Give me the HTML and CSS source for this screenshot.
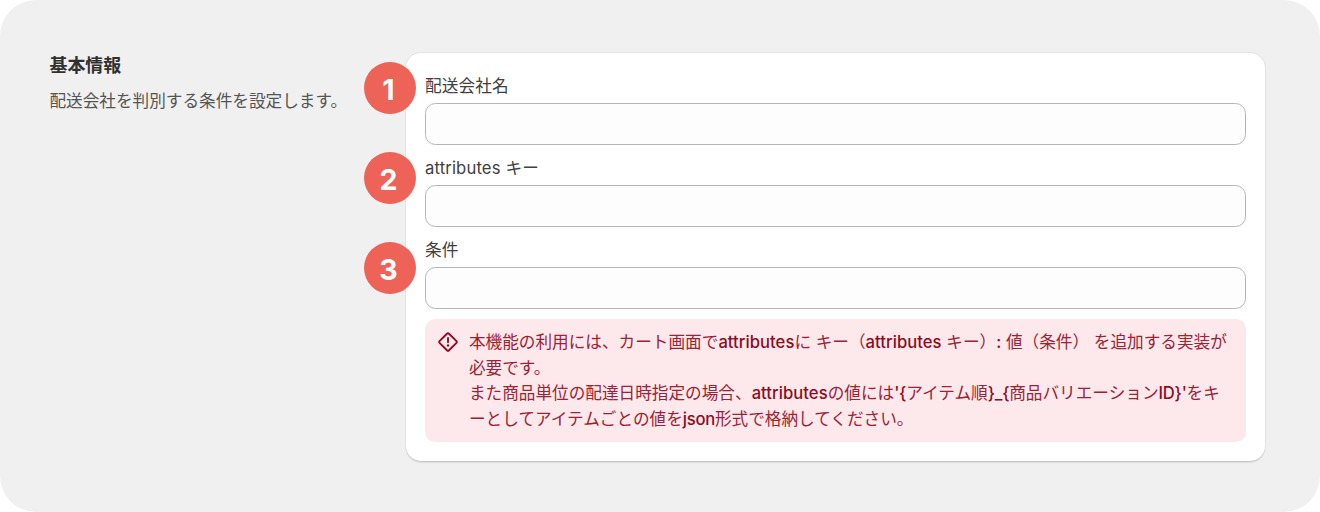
FILE: index.html
```html
<!DOCTYPE html>
<html lang="ja">

<head>
    <meta charset="utf-8" />
    <title>基本情報</title>
    <link rel="stylesheet" href="styles.css">
</head>

<body>
    <div class="page">
        <div class="about">
            <h2>基本情報</h2>
            <p>配送会社を判別する条件を設定します。</p>
        </div>
        <div class="card">
            <div class="field">
                <span class="badge">1</span>
                <label for="company">配送会社名</label>
                <input type="text" id="company">
            </div>
            <div class="field">
                <span class="badge second">2</span>
                <label for="key">attributes キー</label>
                <input type="text" id="key">
            </div>
            <div class="field">
                <span class="badge third">3</span>
                <label for="condition">条件</label>
                <input type="text" id="condition">
            </div>
            <div class="notice">
                <svg class="icon" viewBox="0 0 20 20" fill="none" stroke="#8e0b21" stroke-width="1.9" stroke-linecap="round" stroke-linejoin="round">
                    <path d="M9.2 1.5a1.1 1.1 0 0 1 1.6 0l7.7 7.7a1.1 1.1 0 0 1 0 1.6l-7.7 7.7a1.1 1.1 0 0 1-1.6 0l-7.7-7.7a1.1 1.1 0 0 1 0-1.6z" />
                    <path d="M10 6v4.3" />
                    <circle cx="10" cy="13.4" r="1.2" fill="#8e0b21" stroke="none" />
                </svg>
                <p>本機能の利用には、カート画面で<b>attributes</b>に キー（<b>attributes</b> キー）<b>:</b> 値（条件） を追加する実装が<br>
                    必要です。<br>
                    また商品単位の配達日時指定の場合、<b>attributes</b>の値には<b class="tight">'{</b>アイテム順<b class="tight">}_{</b>商品バリエーション<b class="tight">ID}'</b>をキ<br>
                    ーとしてアイテムごとの値を<b class="tight">json</b>形式で格納してください。</p>
            </div>
        </div>
    </div>
</body>

</html>
```
FILE: styles.css
```css
body {
    margin: 0;
    background-color: #fff;
    font-family: Inter, "Noto Sans CJK JP", sans-serif;
    font-size: 16.64px;
    line-height: 25.6px;
    color: #404040;
}

.page {
    display: flex;
    box-sizing: border-box;
    width: 1320px;
    height: 512px;
    padding: 53px 55px 50px 49.5px;
    border-radius: 36px;
    background-color: #f0f0f0;
}

.about {
    width: 356.5px;
    flex: none;
    white-space: nowrap;
}

.about h2 {
    margin: 0 0 10.4px;
    color: #303030;
    font-size: 17.92px;
    font-weight: 600;
}

.about p {
    margin: 0;
    color: #555;
}

.card {
    display: flex;
    flex-direction: column;
    gap: 10.2px;
    flex: 1;
    box-sizing: border-box;
    height: 408px;
    padding: 20.6px 19px 19px;
    border-radius: 15px;
    background-color: #fff;
    box-shadow: 0 1px 0 0 #c8c8c8, 0 0 0 1px #e3e3e3, 0 2px 1px 0 #ddd;
}

.field {
    display: flex;
    flex-direction: column;
    gap: 4px;
    position: relative;
}

.field input {
    box-sizing: border-box;
    width: 100%;
    height: 42px;
    padding: 6px 15px;
    border: 1px solid #b5b5b5;
    border-radius: 10.5px;
    background-color: #fdfdfd;
}

/* number marks over the left edge of the card */
.badge {
    position: absolute;
    left: -61px;
    top: -11.6px;
    width: 52px;
    height: 52px;
    border-radius: 50%;
    background-color: #ed6358;
    color: #fff;
    font-size: 28.5px;
    font-weight: 700;
    line-height: 55px;
    text-align: center;
    text-indent: -3px;
}

.badge.second {
    top: -3.4px;
}

.badge.third {
    top: 4.8px;
}

label {
    padding-top: 0.4px;
    margin-bottom: -0.4px;
    letter-spacing: 0.15px;
}

.notice {
    display: flex;
    gap: 11px;
    padding: 11px 13px 9.2px;
    border-radius: 10px;
    background-color: #fde8eb;
    color: #9a2337;
    white-space: nowrap;
}

.notice p {
    margin: 0;
}

.notice b {
    color: #8e0b21;
    font-weight: 450;
    letter-spacing: 0.04px;
}

.notice .tight {
    letter-spacing: -0.25px;
}

.icon {
    width: 20px;
    height: 20px;
    flex: none;
    margin-top: 2px;
}
```
